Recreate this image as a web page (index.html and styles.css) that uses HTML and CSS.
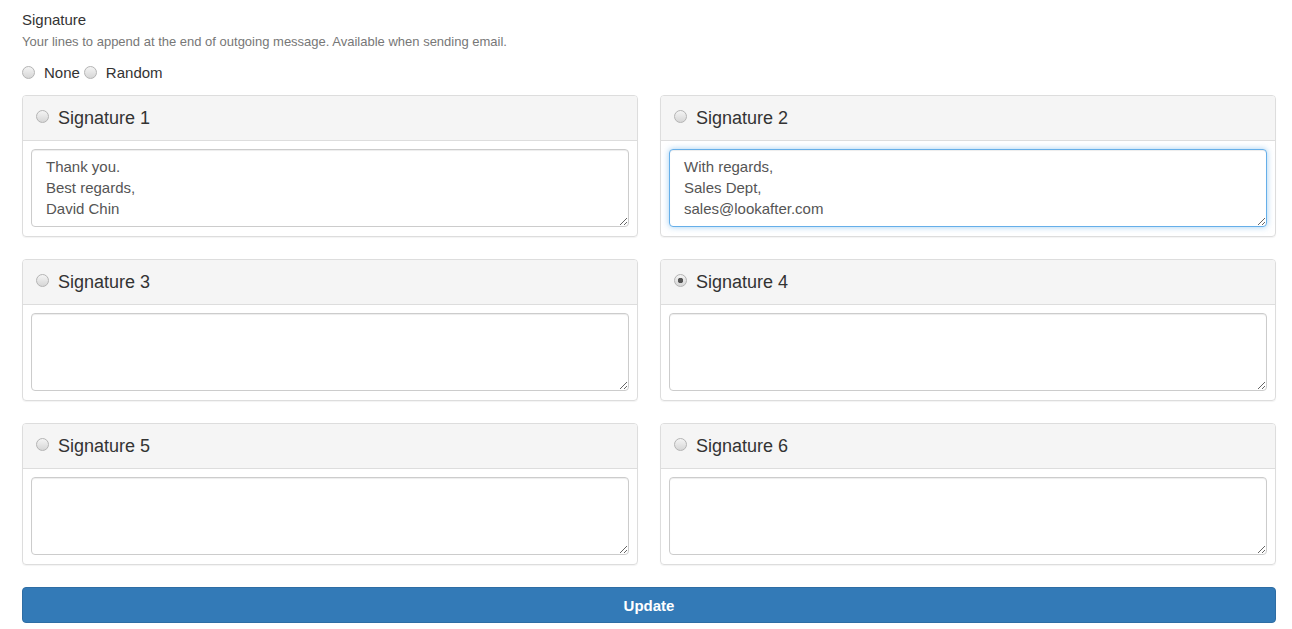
FILE: index.html
```html
<!DOCTYPE html>
<html lang="en">
<head>
    <meta charset="UTF-8">
    <title>Signature</title>
    <link rel="stylesheet" href="styles.css">
</head>
<body>
<div class="settings">
    <div class="field-title">Signature</div>
    <div class="help">Your lines to append at the end of outgoing message. Available when sending email.</div>
    <div class="choice">
        <label><input type="radio" name="sig"> None</label>
        <label><input type="radio" name="sig"> Random</label>
    </div>

    <div class="grid">
        <div class="panel">
            <div class="panel-heading"><input type="radio" name="sig"> Signature 1</div>
            <div class="panel-body"><textarea rows="3">Thank you.
Best regards,
David Chin</textarea></div>
        </div>
        <div class="panel">
            <div class="panel-heading"><input type="radio" name="sig"> Signature 2</div>
            <div class="panel-body"><textarea rows="3" class="focus">With regards,
Sales Dept,
sales@lookafter.com</textarea></div>
        </div>
        <div class="panel">
            <div class="panel-heading"><input type="radio" name="sig"> Signature 3</div>
            <div class="panel-body"><textarea rows="3"></textarea></div>
        </div>
        <div class="panel">
            <div class="panel-heading"><input type="radio" name="sig" checked> Signature 4</div>
            <div class="panel-body"><textarea rows="3"></textarea></div>
        </div>
        <div class="panel">
            <div class="panel-heading"><input type="radio" name="sig"> Signature 5</div>
            <div class="panel-body"><textarea rows="3"></textarea></div>
        </div>
        <div class="panel">
            <div class="panel-heading"><input type="radio" name="sig"> Signature 6</div>
            <div class="panel-body"><textarea rows="3"></textarea></div>
        </div>
    </div>

    <button class="btn-update">Update</button>
</div>
</body>
</html>
```

FILE: styles.css
```css
body {
    margin: 0;
    background: #fff;
    font-family: "Liberation Sans", Arial, sans-serif;
    color: #333;
    overflow: hidden;
}

.settings {
    padding: 10px 16px 0 22px;
}

.field-title {
    font-size: 15px;
    line-height: 19px;
}

.help {
    margin-top: 4px;
    font-size: 13px;
    color: #777;
    line-height: 17px;
}

.choice {
    margin-top: 13px;
    font-size: 15px;
    display: flex;
    gap: 4px;
    line-height: 19px;
}

.choice label {
    display: flex;
    align-items: center;
}

input[type="radio"] {
    -webkit-appearance: none;
    appearance: none;
    width: 13px;
    height: 13px;
    margin: 0 9px 0 0;
    border: 1px solid #b4b4b4;
    border-radius: 50%;
    background: linear-gradient(#f4f4f4, #d6d6d6);
    box-sizing: border-box;
}

input[type="radio"]:checked {
    background: radial-gradient(circle, #555 0 2.5px, transparent 3px), linear-gradient(#f4f4f4, #d6d6d6);
}

.grid {
    margin-top: 13px;
    display: grid;
    grid-template-columns: 1fr 1fr;
    column-gap: 22px;
    row-gap: 22px;
}

.panel {
    border: 1px solid #ddd;
    border-radius: 4px;
    box-shadow: 0 1px 1px rgba(0, 0, 0, 0.05);
    overflow: hidden;
}

.panel-heading {
    background: #f5f5f5;
    border-bottom: 1px solid #ddd;
    height: 44px;
    padding: 0 13px;
    display: flex;
    align-items: center;
    font-size: 18px;
}

.panel-heading input[type="radio"] {
    margin-top: -4px;
}

.panel-body {
    padding: 8px 8px 9px;
}

textarea {
    display: block;
    width: 100%;
    height: 78px;
    box-sizing: border-box;
    padding: 6px 14px;
    border: 1px solid #ccc;
    border-radius: 4px;
    box-shadow: inset 0 1px 1px rgba(0, 0, 0, 0.075);
    font-family: "Liberation Sans", Arial, sans-serif;
    font-size: 15px;
    line-height: 21px;
    color: #555;
    resize: vertical;
}

textarea.focus {
    border-color: #66afe9;
    outline: 0;
    box-shadow: inset 0 1px 1px rgba(0, 0, 0, 0.075), 0 0 6px rgba(102, 175, 233, 0.6);
}

.btn-update {
    display: block;
    width: 100%;
    margin-top: 22px;
    height: 36px;
    background: #337ab7;
    border: 1px solid #2e6da4;
    border-radius: 4px;
    color: #fff;
    font-family: "Liberation Sans", Arial, sans-serif;
    font-size: 15px;
    font-weight: bold;
    cursor: pointer;
}
```
